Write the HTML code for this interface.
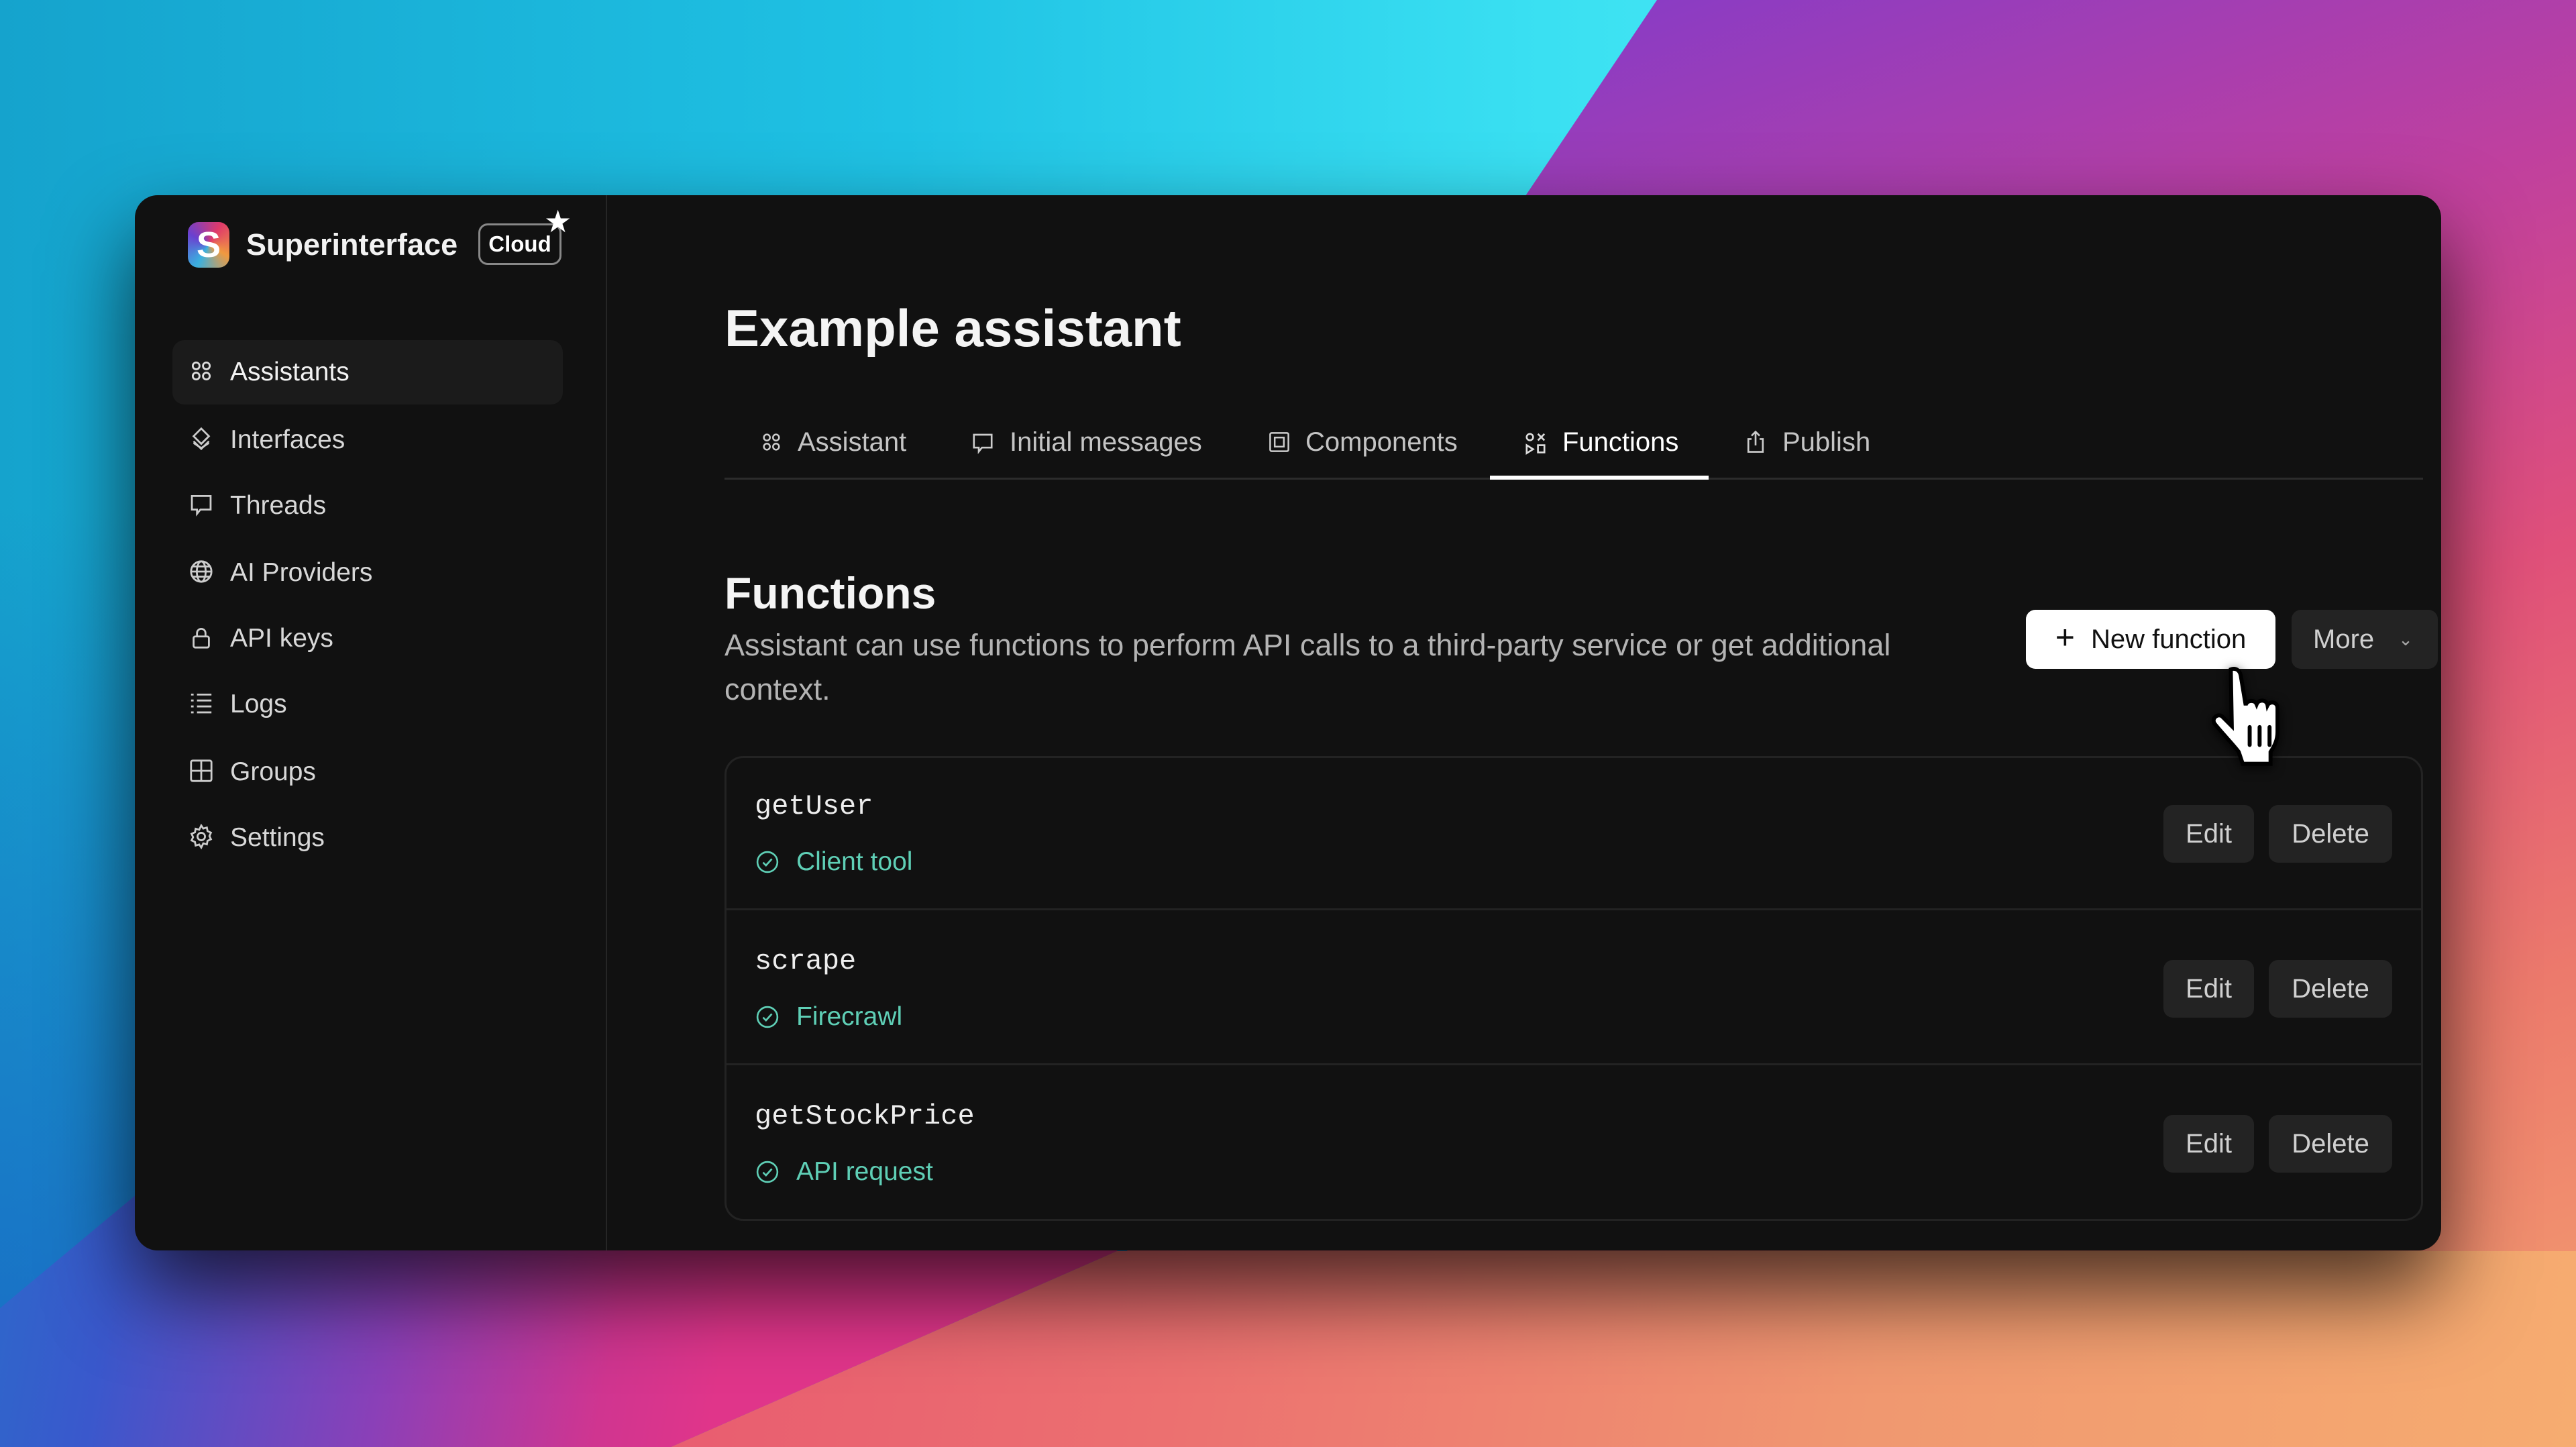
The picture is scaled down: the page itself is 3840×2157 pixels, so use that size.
<!DOCTYPE html>
<html><head><meta charset="utf-8"><style>
*{margin:0;padding:0;box-sizing:border-box}
body{width:3840px;height:2157px;overflow:hidden;position:relative;font-family:"Liberation Sans",sans-serif;background:linear-gradient(180deg,rgba(26,100,196,0) 35%,rgba(26,100,196,.9) 100%),linear-gradient(90deg,#15a3cd 0%,#1fc2e4 35%,#3ae0f2 60%,#45e6f4 70%)}
.r{position:absolute;left:0;top:0;width:3840px;height:2157px}
.win{position:absolute;left:201px;top:291px;width:3438px;height:1573px;background:#111;border-radius:34px;box-shadow:0 60px 160px rgba(0,0,0,.7);overflow:hidden}
.a{position:absolute}
.side{color:#d8d8d8;font-size:39px}
.ic{position:absolute;width:38px;height:38px}
svg{overflow:visible}
.tab{position:absolute;top:345px;font-size:40px;color:#c4c4c4;line-height:46px}
.btn{position:absolute;background:#232323;color:#d0d0d0;border-radius:14px;font-size:40px;display:flex;align-items:center;justify-content:center}
.mono{font-family:"Liberation Mono",monospace;font-size:42px;color:#eee}
.green{color:#5fcfb6;font-size:39px}
</style></head><body>
<div class="r" style="clip-path:polygon(2470px 0,3840px 0,3840px 2157px,1600px 2157px,2000px 700px);background:linear-gradient(160deg,#4c3cd4 0%,#8a3cc4 25%,#c0409e 45%,#e0507a 62%,#ec7a6c 80%,#f4a070 100%)"></div>
<div class="r" style="clip-path:polygon(0 1950px,300px 1700px,1800px 1700px,1665px 1865px,1000px 2157px,0 2157px);background:linear-gradient(100deg,#1a80c8 0%,#3a58cc 12%,#8a40b8 22%,#d03590 30%,#e0358a 34%)"></div>
<div class="r" style="clip-path:polygon(1665px 1865px,3840px 1865px,3840px 2157px,1000px 2157px);background:linear-gradient(100deg,#e85a70 30%,#ec7070 50%,#f09870 75%,#f6ac70 100%)"></div>

<div class="win">
 <div class="a" style="left:702px;top:0;width:2px;height:1573px;background:#262626"></div>
 <div class="a" style="left:79px;top:40px;width:62px;height:68px;border-radius:16px;background:conic-gradient(from 30deg,#e03a6a,#f09a40,#3ab0e0,#6a40d0,#e03a6a)"></div>
 <div class="a" style="left:79px;top:40px;width:62px;height:68px;color:#fff;font-weight:bold;font-size:54px;text-align:center;line-height:68px">S</div>
 <div class="a" style="left:166px;top:40px;font-size:45px;font-weight:bold;color:#f2f2f2;line-height:68px">Superinterface</div>
 <div class="a" style="left:512px;top:42px;width:124px;height:62px;border:3px solid #888;border-radius:14px;color:#fff;font-weight:bold;font-size:33px;line-height:56px;text-align:center">Cloud</div>
 <div class="a" style="left:610px;top:16px;color:#fff;font-size:46px;line-height:46px">★</div>
 <div class="a" style="left:56px;top:216px;width:582px;height:96px;border-radius:18px;background:#1b1b1b"></div>
 <div class="side">
  <svg class="ic" style="left:80px;top:243px" viewBox="0 0 15 15" fill="none" stroke="#ddd" stroke-width="1.1"><circle cx="4.5" cy="4.5" r="2"/><circle cx="10.5" cy="4.5" r="2"/><circle cx="4.5" cy="10.5" r="2"/><circle cx="10.5" cy="10.5" r="2"/></svg>
  <div class="a" style="left:142px;top:242px;color:#f2f2f2">Assistants</div>
  <svg class="ic" style="left:80px;top:344px" viewBox="0 0 15 15" fill="none" stroke="#ccc" stroke-width="1.1"><path d="M7.5 1.5L12 6 7.5 10.5 3 6z"/><path d="M3 9l4.5 4.5L12 9"/><path d="M3 11.5l4.5 3 4.5-3" transform="translate(0,-1.5)"/></svg>
  <div class="a" style="left:142px;top:343px">Interfaces</div>
  <svg class="ic" style="left:80px;top:442px" viewBox="0 0 15 15" fill="none" stroke="#ccc" stroke-width="1.1"><path d="M2 2.5h11v8H7l-2 2.5v-2.5H2z"/></svg>
  <div class="a" style="left:142px;top:441px">Threads</div>
  <svg class="ic" style="left:80px;top:542px" viewBox="0 0 15 15" fill="none" stroke="#ccc" stroke-width="1.1"><circle cx="7.5" cy="7.5" r="6"/><ellipse cx="7.5" cy="7.5" rx="2.6" ry="6"/><path d="M1.5 7.5h12M2.5 4.5h10M2.5 10.5h10"/></svg>
  <div class="a" style="left:142px;top:541px">AI Providers</div>
  <svg class="ic" style="left:80px;top:640px" viewBox="0 0 15 15" fill="none" stroke="#ccc" stroke-width="1.1"><rect x="3" y="7" width="9" height="6.5" rx="1"/><path d="M5 7V5a2.5 2.5 0 0 1 5 0v2"/></svg>
  <div class="a" style="left:142px;top:639px">API keys</div>
  <svg class="ic" style="left:80px;top:738px" viewBox="0 0 15 15" fill="none" stroke="#ccc" stroke-width="1.1"><path d="M1.5 2.5h1.5M5 2.5h8.5M1.5 6h1.5M5 6h8.5M1.5 9.5h1.5M5 9.5h8.5M1.5 13h1.5M5 13h8.5"/></svg>
  <div class="a" style="left:142px;top:737px">Logs</div>
  <svg class="ic" style="left:80px;top:839px" viewBox="0 0 15 15" fill="none" stroke="#ccc" stroke-width="1.1"><rect x="1.5" y="1.5" width="12" height="12" rx="1"/><path d="M7.5 1.5v12M1.5 7.5h12"/></svg>
  <div class="a" style="left:142px;top:838px">Groups</div>
  <svg class="ic" style="left:80px;top:937px" viewBox="0 0 15 15" fill="none" stroke="#ccc" stroke-width="1.1"><circle cx="7.5" cy="7.5" r="2.2"/><path d="M7.5 1l1.2 1.8 2.1-.6.4 2.1 2 .9-.9 2 .9 1.9-2 .9-.4 2.1-2.1-.6L7.5 14l-1.2-1.8-2.1.6-.4-2.1-2-.9.9-1.9-.9-2 2-.9.4-2.1 2.1.6z"/></svg>
  <div class="a" style="left:142px;top:936px">Settings</div>
 </div>
 <div class="a" style="left:879px;top:150px;font-size:78px;font-weight:bold;color:#f4f4f4;line-height:96px">Example assistant</div>
 <div class="tab" style="left:988px"><svg style="position:absolute;left:-56px;top:6px;width:34px;height:34px" viewBox="0 0 15 15" fill="none" stroke="#ccc" stroke-width="1.1"><circle cx="4.5" cy="4.5" r="2"/><circle cx="10.5" cy="4.5" r="2"/><circle cx="4.5" cy="10.5" r="2"/><circle cx="10.5" cy="10.5" r="2"/></svg>Assistant</div>
 <div class="tab" style="left:1304px"><svg style="position:absolute;left:-58px;top:6px;width:36px;height:36px" viewBox="0 0 15 15" fill="none" stroke="#ccc" stroke-width="1.1"><path d="M2 2.5h11v8H7l-2 2.5v-2.5H2z"/></svg>Initial messages</div>
 <div class="tab" style="left:1745px"><svg style="position:absolute;left:-56px;top:6px;width:34px;height:34px" viewBox="0 0 15 15" fill="none" stroke="#ccc" stroke-width="1.1"><rect x="1.5" y="1.5" width="12" height="12" rx="1"/><rect x="4.5" y="4.5" width="6" height="6"/></svg>Components</div>
 <div class="tab" style="left:2128px;color:#fff"><svg style="position:absolute;left:-58px;top:6px;width:36px;height:36px" viewBox="0 0 15 15" fill="none" stroke="#ddd" stroke-width="1.1"><circle cx="4" cy="4" r="2"/><path d="M9 2l4 4M13 2l-4 4M2 9l4 2.5-4 2.5z"/><rect x="9" y="9" width="4" height="4.5"/></svg>Functions</div>
 <div class="tab" style="left:2456px"><svg style="position:absolute;left:-58px;top:4px;width:36px;height:36px" viewBox="0 0 15 15" fill="none" stroke="#ccc" stroke-width="1.1"><path d="M5 6H3v8h9V6h-2M7.5 10V1.5M5 4l2.5-2.5L10 4"/></svg>Publish</div>
 <div class="a" style="left:879px;top:421px;width:2532px;height:3px;background:#2c2c2c"></div>
 <div class="a" style="left:2020px;top:418px;width:326px;height:6px;background:#fff"></div>

 <div class="a" style="left:879px;top:553px;font-size:66px;font-weight:bold;color:#f4f4f4;line-height:80px">Functions</div>
 <div class="a" style="left:879px;top:638px;width:1840px;font-size:45px;color:#b4b4b4;line-height:66px">Assistant can use functions to perform API calls to a third-party service or get additional context.</div>
 <div class="btn" style="left:2819px;top:618px;width:372px;height:88px;background:#fff;color:#111"><span style="font-size:50px;font-weight:300;margin-right:24px;margin-top:-6px">+</span>New function</div>
 <div class="btn" style="left:3215px;top:618px;width:218px;height:88px;justify-content:flex-start;padding-left:32px">More<span style="margin-left:36px;font-size:26px;color:#aaa">⌄</span></div>

 <div class="a" style="left:879px;top:836px;width:2532px;height:693px;border:3px solid #232323;border-radius:28px"></div>
 <div class="a" style="left:879px;top:1063px;width:2532px;height:3px;background:#232323"></div>
 <div class="a" style="left:879px;top:1294px;width:2532px;height:3px;background:#232323"></div>

 <div class="a mono" style="left:924px;top:887px">getUser</div>
 <div class="a green" style="left:986px;top:972px">Client tool</div>
 <svg class="a" style="left:925px;top:976px;width:36px;height:36px" viewBox="0 0 15 15" fill="none" stroke="#5fcfb6" stroke-width="1.1"><circle cx="7.5" cy="7.5" r="6.2"/><path d="M4.8 7.8l1.8 1.8 3.6-4"/></svg>
 <div class="btn" style="left:3024px;top:909px;width:135px;height:86px">Edit</div>
 <div class="btn" style="left:3181px;top:909px;width:184px;height:86px">Delete</div>

 <div class="a mono" style="left:924px;top:1118px">scrape</div>
 <div class="a green" style="left:986px;top:1203px">Firecrawl</div>
 <svg class="a" style="left:925px;top:1207px;width:36px;height:36px" viewBox="0 0 15 15" fill="none" stroke="#5fcfb6" stroke-width="1.1"><circle cx="7.5" cy="7.5" r="6.2"/><path d="M4.8 7.8l1.8 1.8 3.6-4"/></svg>
 <div class="btn" style="left:3024px;top:1140px;width:135px;height:86px">Edit</div>
 <div class="btn" style="left:3181px;top:1140px;width:184px;height:86px">Delete</div>

 <div class="a mono" style="left:924px;top:1349px">getStockPrice</div>
 <div class="a green" style="left:986px;top:1434px">API request</div>
 <svg class="a" style="left:925px;top:1438px;width:36px;height:36px" viewBox="0 0 15 15" fill="none" stroke="#5fcfb6" stroke-width="1.1"><circle cx="7.5" cy="7.5" r="6.2"/><path d="M4.8 7.8l1.8 1.8 3.6-4"/></svg>
 <div class="btn" style="left:3024px;top:1371px;width:135px;height:86px">Edit</div>
 <div class="btn" style="left:3181px;top:1371px;width:184px;height:86px">Delete</div>

 <svg class="a" style="left:3082px;top:698px;width:150px;height:160px;filter:drop-shadow(0 4px 8px rgba(0,0,0,.8))" viewBox="0 0 50 54">
  <path d="M14 3c2.5-1 4.5 0.5 5 3l2.5 15c0.5-2.5 4.5-3 5.5-0.5c1-2.5 5-2.5 5.5 0.5c1-2 5-2 5 1.5l0 12c0 4-1.5 7-3.5 10l0 6H20l-2-6c-3-4-8-9-12-14c-2-2.5 1-5.5 3.5-4l5 5z" fill="#fff" stroke="#000" stroke-width="2"/>
  <path d="M23.5 32v9M28.5 32v9M33.5 32v9" stroke="#000" stroke-width="2" stroke-linecap="round"/>
 </svg>
</div>
</body></html>
